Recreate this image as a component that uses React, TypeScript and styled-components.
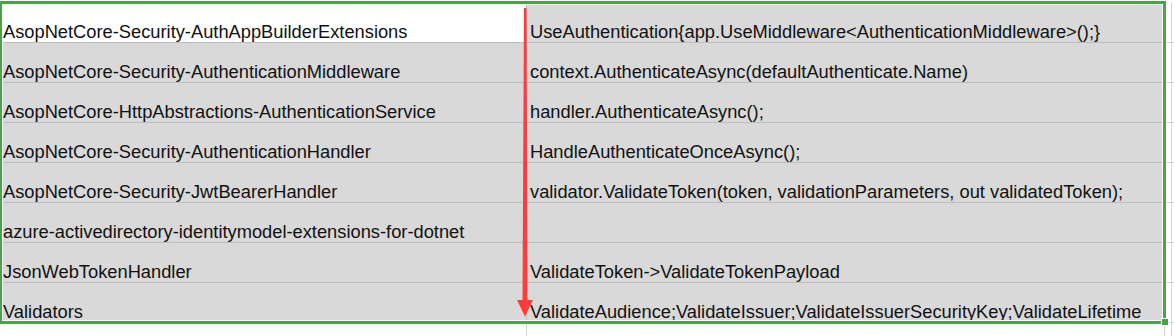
import React from "react";
import styled, { createGlobalStyle } from "styled-components";

const GlobalStyle = createGlobalStyle`
  html, body {
    margin: 0;
    padding: 0;
    background: #ffffff;
  }
  * { box-sizing: border-box; }
`;

const Sheet = styled.div`
  position: relative;
  width: 1174px;
  height: 336px;
  overflow: hidden;
  background: #ffffff;
  padding-top: 3px;
  display: flex;
  flex-direction: column;
  font-family: "Liberation Sans", Arial, sans-serif;
  font-size: 18.3px;
  color: #111111;
`;

const Row = styled.div<{ $height?: number }>`
  display: grid;
  grid-template-columns: 527px 638px 7px 1fr;
  height: ${(p) => p.$height ?? 40}px;
  flex: none;
`;

const Cell = styled.div<{ $fill: "white" | "gray"; $line: string; $noBottom?: boolean }>`
  display: flex;
  align-items: flex-end;
  padding-left: 3px;
  line-height: 20px;
  white-space: nowrap;
  overflow: hidden;
  background: ${(p) => (p.$fill === "gray" ? "#d9d9d9" : "#ffffff")};
  border-right: 1px solid ${(p) => p.$line};
  border-bottom: ${(p) => (p.$noBottom ? "none" : `1px solid ${p.$line}`)};
`;

const SelectionFrame = styled.div`
  position: absolute;
  left: -1px;
  top: 1px;
  width: 1167px;
  height: 323px;
  border: 3px solid #47a447;
  box-shadow: inset 0 0 0 1px #ffffff;
  pointer-events: none;
`;

const FillHandle = styled.div`
  position: absolute;
  left: 1161px;
  top: 318px;
  width: 8px;
  height: 8px;
  background: #47a447;
  border: 1px solid #ffffff;
`;

const ArrowLayer = styled.svg`
  position: absolute;
  left: 0;
  top: 0;
  pointer-events: none;
`;

const colA = [
  "AsopNetCore-Security-AuthAppBuilderExtensions",
  "AsopNetCore-Security-AuthenticationMiddleware",
  "AsopNetCore-HttpAbstractions-AuthenticationService",
  "AsopNetCore-Security-AuthenticationHandler",
  "AsopNetCore-Security-JwtBearerHandler",
  "azure-activedirectory-identitymodel-extensions-for-dotnet",
  "JsonWebTokenHandler",
  "Validators",
];

const colB = [
  "UseAuthentication{app.UseMiddleware<AuthenticationMiddleware>();}",
  "context.AuthenticateAsync(defaultAuthenticate.Name)",
  "handler.AuthenticateAsync();",
  "HandleAuthenticateOnceAsync();",
  "validator.ValidateToken(token, validationParameters, out validatedToken);",
  "",
  "ValidateToken->ValidateTokenPayload",
  "ValidateAudience;ValidateIssuer;ValidateIssuerSecurityKey;ValidateLifetime",
];

const DARK = "#bdbdbd";
const LIGHT = "#d4d4d4";

export default function App() {
  return (
    <>
      <GlobalStyle />
      <Sheet>
        {colA.map((a, i) => (
          <Row key={i}>
            <Cell $fill={i === 0 ? "white" : "gray"} $line={DARK}>
              {a}
            </Cell>
            <Cell $fill="gray" $line={DARK}>
              {colB[i]}
            </Cell>
            <Cell $fill="white" $line={LIGHT} />
            <Cell $fill="white" $line={LIGHT} />
          </Row>
        ))}
        <Row $height={20}>
          <Cell $fill="white" $line={LIGHT} $noBottom />
          <Cell $fill="white" $line={LIGHT} $noBottom />
          <Cell $fill="white" $line={LIGHT} $noBottom />
          <Cell $fill="white" $line={LIGHT} $noBottom />
        </Row>
        <SelectionFrame />
        <FillHandle />
        <ArrowLayer width={1174} height={336} viewBox="0 0 1174 336">
          <polygon
            points="524,8 526.5,8 527.5,300 533,300 525,316.5 517,300 522.5,300"
            fill="#ff3b3b"
          />
        </ArrowLayer>
      </Sheet>
    </>
  );
}
